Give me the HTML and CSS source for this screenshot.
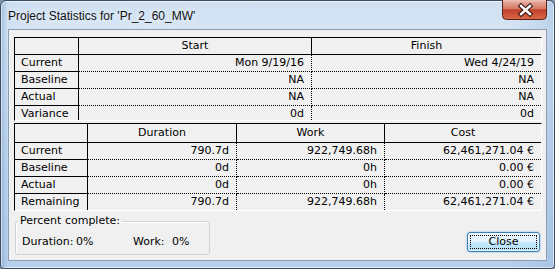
FILE: index.html
```html
<!DOCTYPE html>
<html lang="en">
<head>
<meta charset="utf-8">
<title>Project Statistics</title>
<link rel="stylesheet" href="styles.css">
</head>
<body>
<div class="window">
  <header class="titlebar">
    <div class="title">Project Statistics for 'Pr_2_60_MW'</div>
    <div class="close-x">
      <svg width="45" height="20" viewBox="0 0 45 20">
        <defs>
          <linearGradient id="cg" x1="0" y1="0" x2="0" y2="1">
            <stop offset="0" stop-color="#eab2a4"/>
            <stop offset="0.45" stop-color="#d47a64"/>
            <stop offset="0.5" stop-color="#c3402a"/>
            <stop offset="1" stop-color="#d86a48"/>
          </linearGradient>
        </defs>
        <path d="M0.5 0 V15.5 Q0.5 19.5 4.5 19.5 H40.5 Q44.5 19.5 44.5 15.5 V0" fill="url(#cg)" stroke="#5a2219"/>
        <path d="M1.5 1 H43.5" stroke="#f5d2c8" stroke-width="1" opacity="0.7"/>
        <path d="M19 6 L28 14 M28 6 L19 14" stroke="#3b1a14" stroke-width="4.6" stroke-linecap="square"/>
        <path d="M19 6 L28 14 M28 6 L19 14" stroke="#ffffff" stroke-width="2.4" stroke-linecap="square"/>
      </svg>
    </div>
  </header>
  <main class="client">
    <div class="grid dates">
      <div class="hc"></div><div class="hc">Start</div><div class="hc last">Finish</div>
      <div class="lab">Current</div><div class="val">Mon 9/19/16</div><div class="val last">Wed 4/24/19</div>
      <div class="lab">Baseline</div><div class="val">NA</div><div class="val last">NA</div>
      <div class="lab">Actual</div><div class="val">NA</div><div class="val last">NA</div>
      <div class="lab end">Variance</div><div class="val end">0d</div><div class="val last end">0d</div>
    </div>
    <div class="grid work">
      <div class="hc"></div><div class="hc">Duration</div><div class="hc">Work</div><div class="hc last">Cost</div>
      <div class="lab">Current</div><div class="val">790.7d</div><div class="val">922,749.68h</div><div class="val last">62,461,271.04 €</div>
      <div class="lab">Baseline</div><div class="val">0d</div><div class="val">0h</div><div class="val last">0.00 €</div>
      <div class="lab">Actual</div><div class="val">0d</div><div class="val">0h</div><div class="val last">0.00 €</div>
      <div class="lab end">Remaining</div><div class="val end">790.7d</div><div class="val end">922,749.68h</div><div class="val last end">62,461,271.04 €</div>
    </div>
    <div class="bottom">
      <fieldset class="group">
        <legend>Percent complete:</legend>
        <div class="pc-row">
          <span>Duration:</span><span>0%</span><span>Work:</span><span>0%</span>
        </div>
      </fieldset>
      <button class="btn" type="button"><span class="focus">Close</span></button>
    </div>
  </main>
</div>
</body>
</html>
```

FILE: styles.css
```css
* { box-sizing: border-box; }
html, body { margin: 0; padding: 0; }
body {
  width: 555px;
  height: 269px;
  overflow: hidden;
  background: #7d93ad;
  font-family: "DejaVu Sans", sans-serif;
  font-size: 11px;
  color: #000;
}
.window {
  width: 555px;
  height: 269px;
  display: flex;
  flex-direction: column;
  border: 1px solid #3f4c5e;
  border-radius: 6px 6px 4px 4px;
  padding: 0 7px 7px 7px;
  background:
    linear-gradient(90deg, rgba(120,160,210,0.55) 0, rgba(190,212,238,0.2) 7px, rgba(255,255,255,0) 40px, rgba(255,255,255,0) 92%, rgba(140,175,215,0.35) 100%),
    linear-gradient(180deg, #cfe0f2 0%, #d8e6f5 12%, #c3d8ef 60%, #b7cfeb 100%);
  box-shadow: inset 0 0 0 1px rgba(255,255,255,0.55);
}
.titlebar {
  height: 28px;
  flex: none;
  display: flex;
  justify-content: space-between;
  align-items: flex-start;
}
.title {
  margin-top: 7px;
  font-family: "Liberation Sans", Arial, sans-serif;
  font-size: 12px;
  line-height: 16px;
  color: #111;
  text-shadow: 0 0 6px rgba(255,255,255,0.9);
}
.close-x {
  margin-top: -1px;
  width: 45px;
  height: 20px;
}
.close-x svg { display: block; }
.client {
  flex: 1;
  background: #f0f0f0;
  border: 1px solid #8b9db4;
  padding: 7px 0 0 5px;
}
.grid {
  display: grid;
  width: 528px;
  border-top: 1px solid #000;
  border-left: 1px solid #000;
  border-right: 1px solid #fff;
  border-bottom: 1px solid #fff;
}
.dates {
  grid-template-columns: 64px 233px 229px;
  grid-template-rows: 17px 17px 17px 17px 14px;
}
.work {
  margin-top: 2px;
  grid-template-columns: 73px 149px 148px 156px;
  grid-template-rows: 19px 17px 17px 17px 16px;
}
.grid > div {
  line-height: 16px;
  overflow: hidden;
  white-space: nowrap;
}
.hc {
  text-align: center;
  border-right: 1px solid #000;
  border-bottom: 1px solid #000;
}
.work .hc { line-height: 18px; }
.lab {
  padding-left: 6px;
  border-right: 1px solid #000;
  border-bottom: 1px solid #000;
}
.val {
  text-align: right;
  padding-right: 7px;
  border-right: 1px dotted #000;
  border-bottom: 1px dotted #000;
}
.grid > .last { border-right: none; }
.grid > .end { border-bottom: none; }
.bottom {
  width: 528px;
  margin-top: 3px;
  display: flex;
  align-items: flex-start;
  justify-content: space-between;
}
.group {
  margin: 0 0 0 1px;
  width: 195px;
  border: 1px solid #cdd5db;
  border-radius: 3px;
  padding: 7px 0 5px 2px;
  box-shadow: inset 1px 1px 0 #fff;
}
.group legend {
  padding: 0 2px;
  line-height: 14px;
  font-size: 11px;
}
.pc-row {
  display: grid;
  grid-template-columns: 54px 57px 39px auto;
  padding-left: 4px;
  line-height: 14px;
}
.btn {
  margin: 18px 2px 0 0;
  width: 73px;
  height: 20px;
  padding: 2px;
  border: 1px solid #3c7fb1;
  border-radius: 3px;
  background: linear-gradient(180deg, #eef8fe 0%, #e0f2fd 48%, #c6e8fb 52%, #b3dff7 100%);
  box-shadow: 0 0 2px 0 rgba(60,160,230,0.7), inset 0 0 0 1px rgba(255,255,255,0.6);
  font-family: "DejaVu Sans", sans-serif;
  font-size: 11px;
  color: #000;
  display: flex;
}
.focus {
  flex: 1;
  display: flex;
  align-items: center;
  justify-content: center;
  border: 1px dotted #000;
  line-height: 12px;
}
```
